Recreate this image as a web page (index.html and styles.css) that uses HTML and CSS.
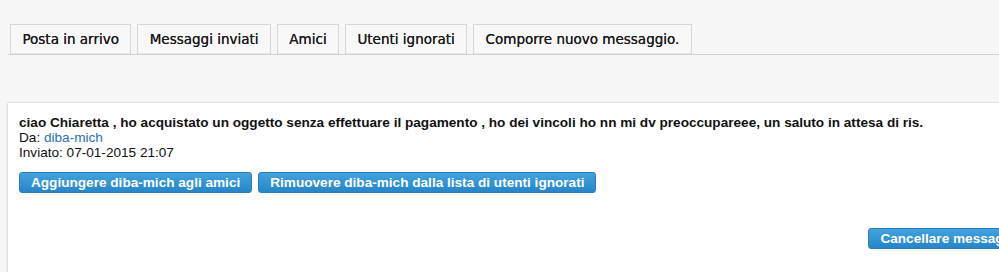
FILE: index.html
```html
<!DOCTYPE html>
<html lang="it">
<head>
    <meta charset="utf-8"/>
    <title>Messaggi privati</title>
    <link rel="stylesheet" href="styles.css">
</head>
<body>
    <!-- Schede -->
    <div class="tabs">
        <a class="tab" href="#">Posta in arrivo</a>
        <a class="tab" href="#">Messaggi inviati</a>
        <a class="tab" href="#">Amici</a>
        <a class="tab" href="#">Utenti ignorati</a>
        <a class="tab" href="#">Comporre nuovo messaggio.</a>
    </div>

    <!-- Messaggio -->
    <div class="panel">
        <div class="subject">ciao Chiaretta , ho acquistato un oggetto senza effettuare il pagamento , ho dei vincoli ho nn mi dv preoccupareee, un saluto in attesa di ris.</div>
        <div class="meta">Da: <a href="#">diba-mich</a></div>
        <div class="meta">Inviato: 07-01-2015 21:07</div>
        <div class="buttons">
            <button class="btn">Aggiungere diba-mich agli amici</button>
            <button class="btn">Rimuovere diba-mich dalla lista di utenti ignorati</button>
        </div>
        <div class="actions">
            <button class="btn">Cancellare messaggio</button>
        </div>
    </div>
</body>
</html>
```

FILE: styles.css
```css
html, body {
    margin:0;
    padding:0;
    height:100%;
    overflow:hidden;
}
body {
    background:#f7f7f7;
    font-family:"Liberation Sans", Arial, sans-serif;
    font-size:13.6px;
    color:#111;
}
.tabs {
    display:flex;
    gap:6px;
    margin:24px 0 0 8px;
    padding-left:2px;
    border-bottom:1px solid #cfcfcf;
    width:1100px;
}
.tab {
    display:block;
    height:29px;
    line-height:29px;
    padding:0 11.4px;
    border:1px solid #d6d6d6;
    border-bottom:none;
    background:#f8f8f8;
    font-family:"DejaVu Sans", Verdana, sans-serif;
    font-size:13.5px;
    color:#1a1a1a;
    text-decoration:none;
    text-shadow:0 0 0.4px #1a1a1a;
    box-shadow:inset 0 -1px 0 #e6e6e6;
}
.panel {
    margin:48px 0 0 8px;
    width:1017px;
    height:300px;
    padding:12px 11px;
    background:#fff;
    box-shadow:-1px 0 2px rgba(0,0,0,0.12), 0 -1px 1px rgba(0,0,0,0.04);
}
.subject {
    font-weight:bold;
    line-height:15px;
}
.meta {
    line-height:15px;
}
.meta a {
    color:#2a6fb8;
    text-decoration:none;
}
.buttons {
    display:flex;
    gap:6px;
    margin-top:12px;
}
.btn {
    height:21px;
    padding:0 11px;
    border:1px solid #2a7dbc;
    border-radius:3px;
    background:linear-gradient(#42a3de, #2785c8);
    color:#fff;
    font-family:"Liberation Sans", Arial, sans-serif;
    font-size:13.6px;
    font-weight:bold;
    line-height:19px;
}
.actions {
    display:flex;
    justify-content:flex-end;
    margin-top:35px;
}
```
